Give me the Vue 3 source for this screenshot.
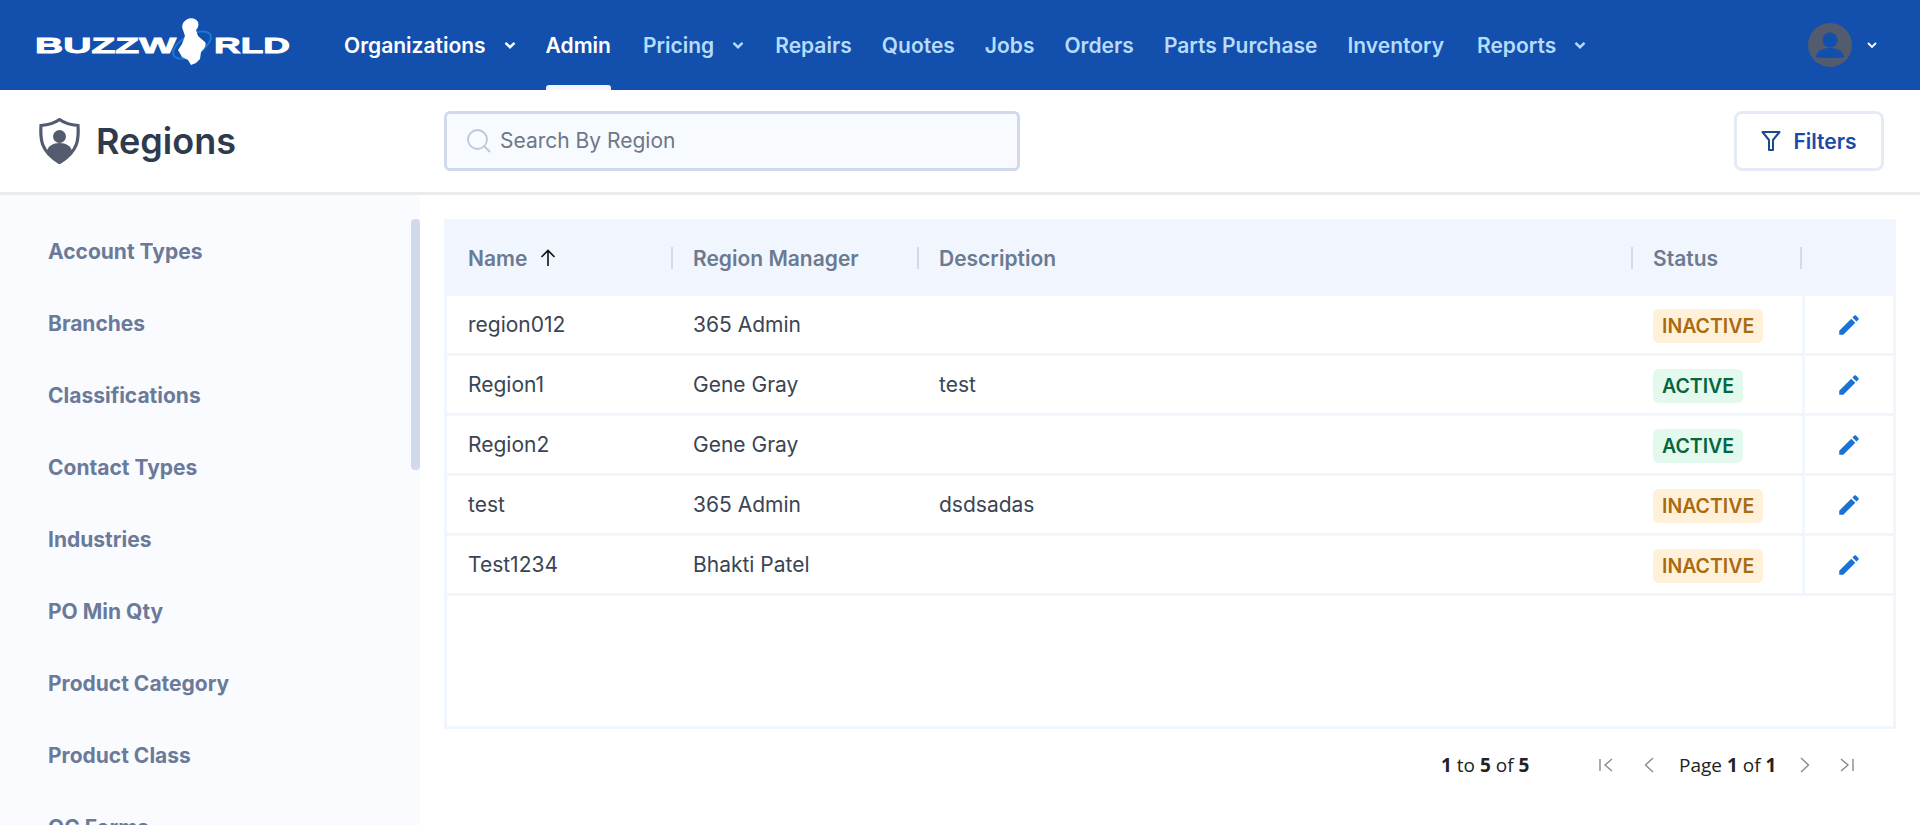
<script setup>
const nav = [
  { label: 'Organizations', caret: true, state: 'white' },
  { label: 'Admin', state: 'active' },
  { label: 'Pricing', caret: true },
  { label: 'Repairs' },
  { label: 'Quotes' },
  { label: 'Jobs' },
  { label: 'Orders' },
  { label: 'Parts Purchase' },
  { label: 'Inventory' },
  { label: 'Reports', caret: true }
]
const side = ['Account Types', 'Branches', 'Classifications', 'Contact Types', 'Industries', 'PO Min Qty', 'Product Category', 'Product Class', 'QC Forms', 'Regions']
const rows = [
  { name: 'region012', mgr: '365 Admin', desc: '', on: false },
  { name: 'Region1', mgr: 'Gene Gray', desc: 'test', on: true },
  { name: 'Region2', mgr: 'Gene Gray', desc: '', on: true },
  { name: 'test', mgr: '365 Admin', desc: 'dsdsadas', on: false },
  { name: 'Test1234', mgr: 'Bhakti Patel', desc: '', on: false }
]
</script>

<template>
  <div class="page">
    <header class="top">
      <svg class="logo" width="256" height="58" viewBox="0 0 256 58">
        <text x="0" y="35" textLength="141" lengthAdjust="spacingAndGlyphs" class="logo-text">BUZZW</text>
        <text x="179" y="35" textLength="76" lengthAdjust="spacingAndGlyphs" class="logo-text">RLD</text>
        <ellipse cx="157" cy="27" rx="21" ry="10" transform="rotate(-30 157 27)" fill="none" stroke="#1a78d8" stroke-width="2"/>
        <path d="M151 2c4-3 10-2 12 2 1 3 0 6-2 8l2 6 7 6c2 3-1 7-4 10l-1 7-4 4-5 2-3-5-6-3-4-7 4-6 3-8-2-6c-2-4 0-8 3-10z" fill="#fff"/>
      </svg>
      <nav class="nav">
        <div v-for="n in nav" :key="n.label" class="nav-item" :class="n.state">
          <span>{{ n.label }}</span>
          <svg v-if="n.caret" class="caret" width="14" height="14" viewBox="0 0 14 14"><path d="M2.5 4.8 7 9.2l4.5-4.4" fill="none" stroke="currentColor" stroke-width="2.4"/></svg>
        </div>
      </nav>
      <div class="user">
        <svg width="44" height="44" viewBox="0 0 44 44">
          <circle cx="22" cy="22" r="22" fill="#525c6e"/>
          <circle cx="22" cy="17" r="7.5" fill="#134fad"/>
          <path d="M8 34c1-7 8-9 14-9s13 2 14 9c-3 1.500-25 1.500-28 0z" fill="#134fad"/>
        </svg>
        <svg class="user-caret" width="14" height="14" viewBox="0 0 14 14"><path d="M3 5l4 4 4-4" fill="none" stroke="#fff" stroke-width="1.800"/></svg>
      </div>
    </header>

    <section class="bar">
      <div class="title">
        <svg width="41" height="46" viewBox="0 0 41 46">
          <path d="M20.500 1.500C26 5.500 32 7 39 7.500c.8 13 .6 26-18.500 37C1.400 33.500 1.200 20.500 2 7.500 9 7 15 5.500 20.500 1.500z" fill="none" stroke="#525c6e" stroke-width="3.200"/>
          <circle cx="20.500" cy="18.500" r="6.500" fill="#525c6e"/>
          <path d="M8 33c1-5 6-8 12.500-8S32 28 33 33c-3 4-7 7-12.500 10C15 40 11 37 8 33z" fill="#525c6e"/>
        </svg>
        <h1>Regions</h1>
      </div>
      <div class="search">
        <svg width="26" height="26" viewBox="0 0 26 26"><circle cx="11.500" cy="11.500" r="9.500" fill="none" stroke="#bcc7da" stroke-width="1.800"/><path d="M18.500 18.500 24 24" stroke="#bcc7da" stroke-width="1.800"/></svg>
        <span>Search By Region</span>
      </div>
      <button class="filters">
        <svg width="20" height="22" viewBox="0 0 20 22"><path d="M1.500 2h17l-6.500 8v10h-4V10z" fill="none" stroke="#1b4c8a" stroke-width="2" stroke-linejoin="round"/></svg>
        <span>Filters</span>
      </button>
    </section>

    <div class="body">
      <aside class="side">
        <div class="thumb"></div>
        <div v-for="s in side" :key="s" class="side-item">{{ s }}</div>
      </aside>
      <main class="main">
        <div class="table">
          <div class="row head">
            <div class="cell">Name
              <svg class="arrow" width="18" height="20" viewBox="0 0 18 20"><path d="M9 18V2.500M2.500 9 9 2.500 15.500 9" fill="none" stroke="#111" stroke-width="1.600"/></svg>
              <i></i></div>
            <div class="cell">Region Manager<i></i></div>
            <div class="cell">Description<i></i></div>
            <div class="cell">Status<i></i></div>
            <div class="cell"></div>
          </div>
          <div v-for="r in rows" :key="r.name" class="row item">
            <div class="cell">{{ r.name }}</div>
            <div class="cell">{{ r.mgr }}</div>
            <div class="cell">{{ r.desc }}</div>
            <div class="cell"><span class="badge" :class="r.on ? 'on' : 'off'">{{ r.on ? 'ACTIVE' : 'INACTIVE' }}</span></div>
            <div class="cell edit">
              <svg width="26" height="26" viewBox="0 0 24 24"><path fill="#1a73d4" d="M3 17.250V21h3.750L17.810 9.940l-3.750-3.750L3 17.250zM20.710 7.040c.39-.39.39-1.020 0-1.410l-2.340-2.340c-.39-.39-1.020-.39-1.410 0l-1.830 1.830 3.750 3.750 1.830-1.830z"/></svg>
            </div>
          </div>
        </div>
        <div class="pager">
          <span class="count"><b>1</b> to <b>5</b> of <b>5</b></span>
          <div class="controls">
            <svg width="16" height="16" viewBox="0 0 16 16"><path d="M2 2v12M14 2 7 8l7 6" fill="none" stroke="#8a8a8a" stroke-width="1.400"/></svg>
            <svg width="16" height="16" viewBox="0 0 16 16"><path d="M12 1 4.500 8l7.500 7" fill="none" stroke="#8a8a8a" stroke-width="1.400"/></svg>
            <span class="pg">Page <b>1</b> of <b>1</b></span>
            <svg width="16" height="16" viewBox="0 0 16 16"><path d="m4 1 7.500 7L4 15" fill="none" stroke="#8a8a8a" stroke-width="1.400"/></svg>
            <svg width="16" height="16" viewBox="0 0 16 16"><path d="M14 2v12M2 2l7 6-7 6" fill="none" stroke="#8a8a8a" stroke-width="1.400"/></svg>
          </div>
        </div>
      </main>
    </div>
  </div>
</template>

<style>
html, body { margin: 0; height: 825px; overflow: hidden; background: #fff; }
</style>

<style scoped>
.page { width: 1920px; height: 825px; overflow: hidden; font-family: Inter, "Liberation Sans", sans-serif; display: flex; flex-direction: column; }
.top { height: 90px; background: #134fad; display: flex; align-items: center; flex: none; }
.logo { margin-left: 35px; margin-top: 4px; flex: none; }
.logo-text { font-family: "Liberation Sans", sans-serif; font-weight: 700; font-size: 22px; fill: #fff; stroke: #fff; stroke-width: .8px; }
.nav { display: flex; gap: 30px; margin-left: 53px; height: 90px; }
.nav-item { position: relative; display: flex; align-items: center; gap: 17px; color: #b5dcfb; font-size: 21px; font-weight: 600; white-space: nowrap; }
.nav-item.white, .nav-item.active { color: #fff; }
.nav-item.active { margin-right: 2px; margin-left: -1px; }
.nav-item:nth-child(9) { margin-right: 3px; }
.nav-item.active::after { content: ""; position: absolute; left: 0; right: 0; bottom: 0; height: 5px; border-radius: 3px 3px 0 0; background: #f0f5ff; }
.caret { flex: none; }
.user { margin-left: auto; margin-right: 41px; display: flex; align-items: center; gap: 13px; }
.bar { height: 105px; box-sizing: border-box; border-bottom: 3px solid #ebebeb; display: flex; align-items: center; flex: none; position: relative; }
.title { width: 444px; display: flex; align-items: center; gap: 16px; padding-left: 39px; box-sizing: border-box; flex: none; }
.title h1 { margin: 0; font-size: 36px; font-weight: 600; color: #2e3a4d; line-height: 40px; }
.search { width: 576px; height: 60px; box-sizing: border-box; border: 3px solid #d0daec; border-radius: 6px; background: #f7faff; display: flex; align-items: center; gap: 8px; padding-left: 19px; padding-bottom: 2px; color: #6e7787; font-size: 21px; }
.search svg { margin-top: 2px; }
.filters { margin-left: auto; margin-right: 36px; width: 150px; height: 60px; box-sizing: border-box; background: #fff; border: 3px solid #e4eaf6; border-radius: 8px; display: flex; align-items: center; justify-content: center; gap: 12px; color: #1a4aa8; font: 600 21px Inter, sans-serif; padding: 0; }
.body { flex: 1; display: flex; min-height: 0; }
.side { width: 420px; flex: none; background: #fafbff; position: relative; overflow: hidden; padding-top: 21px; box-sizing: border-box; }
.thumb { position: absolute; right: 0; top: 24px; width: 9px; height: 251px; background: #d0daec; border-radius: 4px; }
.side-item { height: 72px; line-height: 72px; padding-left: 48px; font-size: 21px; font-weight: 700; color: #6b7a99; }
.main { flex: 1; padding: 24px 24px 0; min-width: 0; }
.table { width: 1452px; height: 510px; box-sizing: border-box; border: 3px solid #f1f6fe; border-top: 0; }
.row { display: grid; grid-template-columns: 224px 246px 714px 172px 1fr; }
.head { height: 77px; box-sizing: border-box; background: #f1f6fe; margin: 0 -3px; padding: 1px 3px 0; color: #6b7a90; font-size: 21px; font-weight: 600; }
.item { height: 60px; box-sizing: border-box; border-bottom: 3px solid #f1f6fe; color: #3a4454; font-size: 21px; }
.cell { display: flex; align-items: center; padding-left: 21px; position: relative; min-width: 0; white-space: nowrap; }
.row .cell:nth-child(n+2) { padding-left: 22px; }
.head .cell i { position: absolute; right: -2px; top: 27px; height: 22px; width: 2px; background: #d5dae3; }
.head .cell:nth-child(4) i { right: 1px; }
.arrow { margin-left: 12px; }
.item .cell:nth-child(5) { border-left: 3px solid #f1f6fe; margin-left: -1px; }
.edit { justify-content: center; padding: 0 !important; }
.edit svg { margin-left: -1px; }
.badge { height: 34px; line-height: 34px; margin-top: 3px; border-radius: 6px; padding: 0 9px; font-size: 19.500px; font-weight: 600; }
.badge.off { background: #fff0d9; color: #a86b10; }
.badge.on { background: #e3f9ee; color: #05663f; }
.pager { display: flex; align-items: center; height: 72px; font-family: "Open Sans", sans-serif; font-size: 19px; color: #222; padding-left: 997px; }
.count { width: 157px; flex: none; }
.controls { display: flex; align-items: center; }
.controls svg:nth-child(1) { margin-right: 27px; }
.controls svg:nth-child(2) { margin-right: 22px; }
.pg { width: 118px; flex: none; }
.controls svg:nth-child(4) { margin-right: 26px; }
b { font-weight: 700; }
</style>
